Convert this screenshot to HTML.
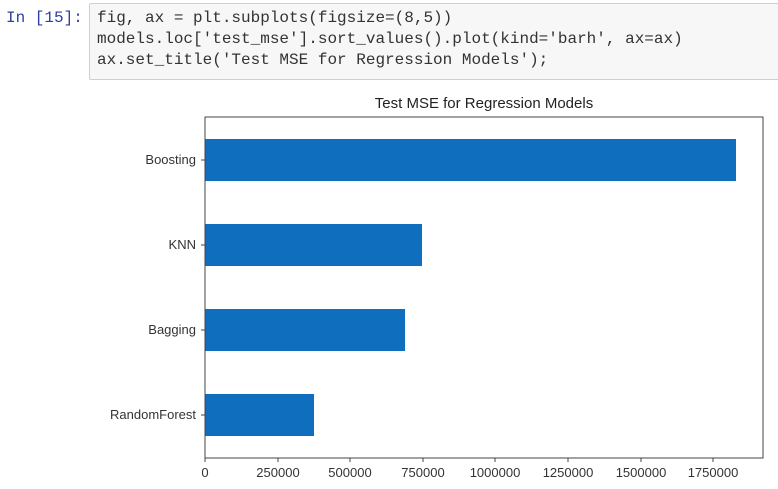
<!DOCTYPE html>
<html><head><style>
body{margin:0;width:778px;height:489px;background:#fff;position:relative;overflow:hidden;font-family:"Liberation Sans",sans-serif;}
.prompt{position:absolute;left:6px;top:8px;font:16px/21px "Liberation Mono",monospace;color:#303f9f;}
.cell{position:absolute;left:89px;top:3px;width:700px;height:77px;background:#f7f7f7;border:1px solid #cfcfcf;border-radius:2px;box-sizing:border-box;}
.code{position:absolute;left:97px;top:8px;font:16px/21px "Liberation Mono",monospace;color:#333;white-space:pre;}
</style></head><body>
<div class="prompt">In [15]:</div>
<div class="cell"></div>
<div class="code">fig, ax = plt.subplots(figsize=(8,5))
models.loc['test_mse'].sort_values().plot(kind='barh', ax=ax)
ax.set_title('Test MSE for Regression Models');</div>
<svg width="778" height="489" style="position:absolute;left:0;top:0" font-family="Liberation Sans, DejaVu Sans, sans-serif" font-size="13" fill="#333">
<text x="484" y="108" text-anchor="middle" font-size="15" fill="#222">Test MSE for Regression Models</text>
<g fill="#106ebe">
<rect x="205" y="139" width="531" height="42"/>
<rect x="205" y="224" width="217" height="42"/>
<rect x="205" y="309" width="200" height="42"/>
<rect x="205" y="394" width="109" height="42"/>
</g>
<rect x="205" y="117" width="558" height="341" fill="none" stroke="#444" stroke-width="1"/>
<g stroke="#444">
<line x1="201" y1="160" x2="205" y2="160"/><line x1="201" y1="245" x2="205" y2="245"/>
<line x1="201" y1="330" x2="205" y2="330"/><line x1="201" y1="415" x2="205" y2="415"/>
<line x1="205" y1="458" x2="205" y2="462"/><line x1="278" y1="458" x2="278" y2="462"/>
<line x1="350" y1="458" x2="350" y2="462"/><line x1="423" y1="458" x2="423" y2="462"/>
<line x1="495" y1="458" x2="495" y2="462"/><line x1="568" y1="458" x2="568" y2="462"/>
<line x1="641" y1="458" x2="641" y2="462"/><line x1="713" y1="458" x2="713" y2="462"/>
</g>
<g text-anchor="end">
<text x="196" y="164">Boosting</text><text x="196" y="249">KNN</text>
<text x="196" y="334">Bagging</text><text x="196" y="419">RandomForest</text>
</g>
<g text-anchor="middle">
<text x="205" y="477">0</text><text x="278" y="477">250000</text><text x="350" y="477">500000</text>
<text x="423" y="477">750000</text><text x="495" y="477">1000000</text><text x="568" y="477">1250000</text>
<text x="641" y="477">1500000</text><text x="713" y="477">1750000</text>
</g>
</svg>
</body></html>
